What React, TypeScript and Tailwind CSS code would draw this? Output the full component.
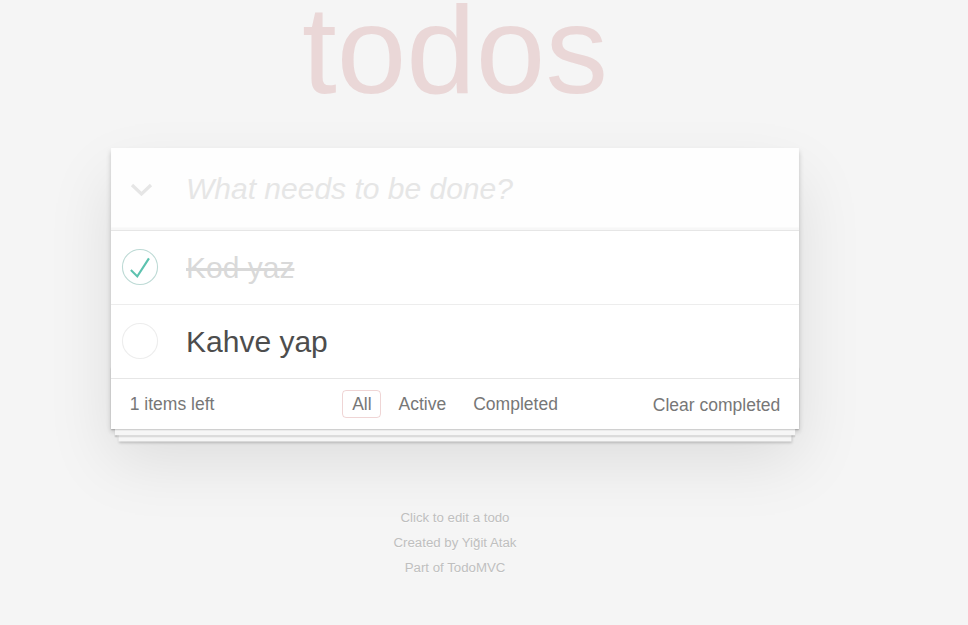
import React from "react";

const todos = [
  { id: 1, title: "Kod yaz", completed: true },
  { id: 2, title: "Kahve yap", completed: false },
];

const filters = ["All", "Active", "Completed"];

function Toggle({ checked }: { checked: boolean }) {
  return (
    <svg width="38" height="38" viewBox="-2 -2 104 104" className="shrink-0">
      <circle cx="50" cy="50" r="48" fill="none" stroke={checked ? "#bddad5" : "#ededed"} strokeWidth="3" />
      {checked && <path fill="#5dc2af" d="M72 25L42 71 27 56l-4 4 20 20 34-52z" />}
    </svg>
  );
}

export default function App() {
  return (
    <div className="min-h-screen bg-[#f5f5f5] font-['Liberation_Sans',Arial,sans-serif] text-[#4d4d4d]">
      <div className="w-[910px]">
        <div className="mx-auto w-[688px]">
          {/* Title */}
          <h1 className="h-[148px] text-center text-[125px] leading-[99px] font-thin text-[rgba(175,47,47,0.15)]">
            todos
          </h1>

          {/* Card */}
          <section className="relative bg-white shadow-[0_2.5px_5px_0_rgba(0,0,0,0.2),0_31px_62px_0_rgba(0,0,0,0.1)]">
            {/* New todo row */}
            <div className="flex h-[82px] items-center bg-[rgba(0,0,0,0.003)] shadow-[inset_0_-2.5px_1.25px_rgba(0,0,0,0.03)]">
              <div className="flex w-[75px] shrink-0 justify-start pl-[19px]">
                <svg width="23" height="13" viewBox="0 0 23 13">
                  <path d="M2 2l9.5 9 9.5-9" fill="none" stroke="#e6e6e6" strokeWidth="3.2" />
                </svg>
              </div>
              <input
                type="text"
                placeholder="What needs to be done?"
                className="h-[42px] flex-1 bg-transparent text-[30px] leading-[42px] text-[#4d4d4d] outline-none placeholder:italic placeholder:text-[#e6e6e6]"
              />
            </div>

            {/* List */}
            <ul className="border-t-[1.25px] border-[#e6e6e6]">
              {todos.map((todo, i) => (
                <li
                  key={todo.id}
                  className={
                    "flex h-[73.5px] items-center " + (i < todos.length - 1 ? "border-b-[1.25px] border-[#ededed]" : "")
                  }
                >
                  <div className="ml-[10px]">
                    <Toggle checked={todo.completed} />
                  </div>
                  <label
                    className={
                      todo.completed
                        ? "ml-[27px] pt-[2px] text-[30px] leading-[36px] text-[#d9d9d9] line-through"
                        : "ml-[27px] pt-[2px] text-[30px] leading-[36px] text-[#4d4d4d]"
                    }
                  >
                    {todo.title}
                  </label>
                </li>
              ))}
            </ul>

            {/* Footer */}
            <footer className="relative grid h-[51px] grid-cols-[1fr_auto_1fr] items-center border-t-[1.25px] border-[#e6e6e6] px-[18.75px] text-[17.5px] text-[#777]">
              <div className="pointer-events-none absolute inset-x-0 bottom-0 h-[62px] shadow-[0_1.25px_1.25px_rgba(0,0,0,0.2),0_10px_0_-3.75px_#f6f6f6,0_11.25px_1.25px_-3.75px_rgba(0,0,0,0.2),0_20px_0_-7.5px_#f6f6f6,0_21.25px_2.5px_-7.5px_rgba(0,0,0,0.2)]" />
              <span className="relative leading-[24px]">1 items left</span>
              <ul className="relative flex items-center">
                {filters.map((f) => (
                  <li key={f}>
                    <a
                      href="#"
                      className={
                        f === "All"
                          ? "mx-[3.75px] block rounded-[4px] border border-[rgba(175,47,47,0.2)] px-[8.75px] py-[3px] leading-[20px]"
                          : "mx-[3.75px] block rounded-[4px] border border-transparent px-[8.75px] py-[3px] leading-[20px]"
                      }
                    >
                      {f}
                    </a>
                  </li>
                ))}
              </ul>
              <button className="relative justify-self-end pt-[2px] leading-[24px] text-[#777]">Clear completed</button>
            </footer>
          </section>

          {/* Info */}
          <footer className="mt-[82px] flex flex-col items-center gap-[12px] text-[13.25px] leading-[13px] text-[#bfbfbf] [text-shadow:0_1px_0_rgba(255,255,255,0.5)]">
            <p>Click to edit a todo</p>
            <p>Created by Yiğit Atak</p>
            <p>Part of TodoMVC</p>
          </footer>
        </div>
      </div>
    </div>
  );
}
